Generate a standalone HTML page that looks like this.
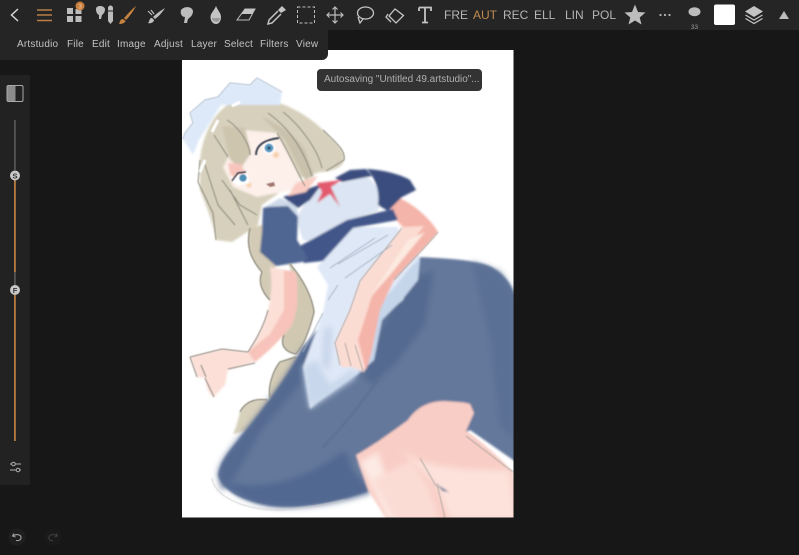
<!DOCTYPE html>
<html><head><meta charset="utf-8">
<style>
html,body{margin:0;padding:0;background:#171717;}
#r{position:relative;width:799px;height:555px;overflow:hidden;background:#171717;font-family:"Liberation Sans",sans-serif;}
#r svg{position:absolute;left:0;top:0;}
.bar{position:absolute;left:0;top:0;width:799px;height:30px;background:#252525;}
.menu{position:absolute;left:0;top:30px;width:328px;height:30px;background:#252525;border-radius:0 0 6px 0;}
.m{position:absolute;top:38px;font-size:10px;line-height:13px;color:#c2c2c2;letter-spacing:.2px;white-space:nowrap;}
.t{position:absolute;top:8px;font-size:12px;line-height:15px;color:#b5b5b5;white-space:nowrap;}
.side{position:absolute;left:0;top:75px;width:30px;height:410px;background:#222;}
.toast{position:absolute;left:317px;top:69px;width:165px;height:22px;background:#333;border-radius:4px;color:#b0b0b0;font-size:10px;line-height:22px;text-indent:7px;letter-spacing:-.03px;white-space:nowrap;overflow:hidden;}
</style></head><body>
<div id="r">
<div class="bar"></div>
<div class="side"></div>

<svg width="799" height="555" viewBox="0 0 799 555">
<defs>
<filter id="b" x="-5%" y="-5%" width="110%" height="110%"><feGaussianBlur stdDeviation="1"/></filter>
<filter id="l" x="-5%" y="-5%" width="110%" height="110%"><feGaussianBlur stdDeviation=".45"/></filter>
<filter id="b2" x="-30%" y="-30%" width="160%" height="160%"><feGaussianBlur stdDeviation="3"/></filter>
<clipPath id="c"><rect x="182" y="50" width="331.500" height="467.500"/></clipPath>
</defs>
<rect x="182" y="50" width="331.500" height="467.500" fill="#fff"/>
<g clip-path="url(#c)">
<g filter="url(#b)">
<!-- braid -->
<path d="M250 228 C246 245 250 258 262 272 C258 282 262 292 270 300 L276 262 L262 225Z" fill="#d3cbb5"/>
<path d="M288 262 C302 276 312 296 314 312 C310 328 304 345 296 354 C285 352 280 345 284 335 L292 318 L296 285Z" fill="#d0c8b1"/>
<path d="M297 356 L280 362 C272 372 268 388 270 400 L282 392 L300 366Z" fill="#d3cbb5"/>
<path d="M268 400 C255 398 245 402 240 412 C238 420 236 428 233 434 C245 432 255 426 262 416Z" fill="#d7d0bb"/>
<!-- skirt -->
<path d="M417 257 C445 258 475 260 490 266 C505 274 513 285 516 300 L516 462 L470 430 L400 470 L372 490 C340 502 300 510 270 506 C245 502 222 492 218 475 C220 460 232 448 240 437 C262 410 285 380 303 347 L340 300 Z" fill="#64789b"/>
<path d="M240 437 C262 410 285 380 303 347 L318 340 L300 385 L262 430 L232 482 L222 490 L218 475 C220 460 232 448 240 437Z" fill="#556b91" filter="url(#b2)"/>
<path d="M406 282 L434 270 L425 325 L395 365 L372 385 L362 375 L380 330Z" fill="#546a90" filter="url(#b2)"/>
<path d="M225 482 C265 492 305 480 345 450 L352 470 L372 492 C340 503 300 510 270 506 C250 502 232 494 225 482Z" fill="#516890" filter="url(#b2)"/>
<path d="M472 262 L500 272 L513 292 L513 440 L500 425 L490 340Z" fill="#5a6f94" filter="url(#b2)"/>
<path d="M378 380 C360 405 340 430 322 448" stroke="#566b90" stroke-width="1.400" fill="none"/>
<!-- legs -->
<path d="M356 455 C372 446 392 432 408 420 C416 408 428 401 445 401 C455 402 465 402 470 404 L474 413 L466 431 C480 440 500 458 513 472 L516 520 L440 520 L436 490 L443 520 L387 520 L368 490Z" fill="#f8cdc5"/>
<path d="M395 445 C420 470 470 470 510 470 L516 520 L450 520 L436 485Z" fill="#fce2db" filter="url(#b2)"/>
<path d="M360 462 L378 452 L400 520 L388 520Z" fill="#fdeae4" filter="url(#b2)"/>
<path d="M372 480 L412 460 L430 490 L440 520 L395 520Z" fill="#fbdcd5" filter="url(#b2)"/>
<path d="M436 484 L449 492 L443 491Z" fill="#4c6490"/>
<!-- left arm -->
<path d="M270 267 L296 272 C298 285 298 300 296 312 L292 325 C282 338 268 352 255 362 L228 370 L225 385 L214 397 C208 394 206 386 205 378 L197 377 L190 357 L222 349 L248 352 C256 340 264 326 268 310 C272 294 272 280 270 267Z" fill="#fce0d8"/>
<path d="M284 270 L296 272 C298 285 298 300 296 312 L292 325 C282 338 268 352 255 362 L248 352 L270 334 L284 310Z" fill="#f7c3ba"/>
<!-- apron -->
<path d="M317 267 L353 227 L397 227 L402 233 L420 257 L403 300 L381 318 L373 358 L355 376 L317 403 L310 409 L303 367 L323 313 L328 285Z" fill="#dfe8f7"/>
<path d="M410 268 L420 258 L418 280 L402 300 L382 320 L374 360 L356 376 L368 340 L380 305Z" fill="#c5d5ea"/>
<path d="M303 367 L316 360 L330 385 L355 368 L355 378 L318 403 L310 409Z" fill="#c8d7eb" filter="url(#b2)"/>
<path d="M324 330 L332 325 L330 370 L322 365Z" fill="#c8d6ea" filter="url(#b2)"/>
<!-- arm right -->
<path d="M390 203 L397 197 C412 203 430 218 438 232 C425 248 410 262 394 280 L378 312 L371 355 L364 372 L352 367 L341 367 L335 343 L350 310 L360 281 L402 228 C396 220 390 212 390 203Z" fill="#fbdcd3"/>
<path d="M390 203 L397 197 C412 203 430 218 438 232 C425 248 410 262 394 280 L380 310 L371 355 L366 370 L358 340 L372 296 L402 255 L424 226 L404 227 C396 220 390 212 390 203Z" fill="#f4b4a9"/>
<path d="M408 240 L425 232 L390 275 L368 300Z" fill="#fce9e0"/>
<!-- torso -->
<path d="M297 222 C298 210 310 195 322 187 L367 177 C376 182 382 195 380 205 L378 211 L347 221 L320 244 L303 240Z" fill="#dbe5f3"/>
<path d="M300 246 L347 220 L393 209 L398 220 L353 228 L323 261 L304 263 L295 250Z" fill="#43578a"/>
<path d="M367 169 C385 170 402 175 410 180 L416 190 L402 197 L388 211 L378 205 C380 190 375 178 367 169Z" fill="#3a4d7e"/>
<path d="M335 178 L350 170 L366 169 L372 176 L342 182Z" fill="#3a4d7e"/>
<path d="M263 208 L288 201 L298 215 L297 240 L308 258 L302 262 L276 266 L260 252 L262 232Z" fill="#4f6592"/>
<path d="M265 207 L280 198 L296 205 L299 218 L288 206Z" fill="#cfdaea"/>
<path d="M283 197 L322 184 L310 200 L298 208Z" fill="#3a4d7e"/>
<!-- ribbon -->
<path d="M317 183 L342 180 L331 187 L340 207 L330 194 L317 203 L322 192Z" fill="#e35a6e"/>
<!-- hair back -->
<path d="M200 160 C203 130 218 102 247 97 C275 97 305 112 323 130 C335 142 346 150 344 160 C343 168 330 172 320 172 L300 178 L262 205 L258 225 L232 242 L216 240 C214 225 206 205 200 190Z" fill="#d7d0bc"/>
<path d="M262 117 C280 125 295 135 305 150 L314 176 L305 180 L285 140Z" fill="#c9c1ab"/>
<!-- headband -->
<path d="M183 139 L193 155 L199 140 L221 105 L280 105 L282 92 L257 78 L250 85 L230 83 L218 97 L205 100 L190 113 L193 123 L185 133Z" fill="#dde9f8"/>
<!-- face -->
<path d="M243 130 L277 133 L305 187 L287 191 L257 197 L233 187 L223 167Z" fill="#fdf0ea"/>
<path d="M222 126 L245 128 L251 153 L241 168 L230 160Z" fill="#cec5af"/>
<path d="M228 163 L241 164 L248 178 L238 180 L230 174Z" fill="#f7c5bb"/>
<path d="M296 183 L312 178 L318 176 L306 192 L288 196Z" fill="#f9cdc3"/>
<circle cx="276" cy="155" r="3" fill="#f7cfa8"/><circle cx="249" cy="185" r="2.500" fill="#f7cfa8"/>
</g>
<g filter="url(#l)">
<!-- lines -->
<path d="M183 139 L185 133 L193 123 L190 113 L205 100 L218 97 L230 83 L250 85 L257 78 L282 92" fill="none" stroke="#b6c2d2" stroke-width="1"/>
<path d="M214 135 L228 157 M205 165 L218 205 L235 225 M227 120 C240 128 250 145 250 155 M268 113 C285 125 302 145 312 176 M283 112 C300 125 318 150 322 168 M323 130 C335 142 346 150 344 160 L326 171 M277 133 C288 150 296 170 305 186 M222 180 L240 205 L257 215 M230 190 L248 225 M200 160 L198 182 L213 213 L216 240" fill="none" stroke="#8f8d80" stroke-width="1"/>
<path d="M250 228 C246 245 250 258 262 272 C258 282 262 292 270 300 M290 264 C302 278 312 296 314 312 C310 328 304 345 296 354 C285 352 280 345 284 335 M296 357 L280 362 C272 372 268 388 270 398 M268 400 C255 398 245 402 240 412" stroke="#8d8a7b" stroke-width="1.300" fill="none"/>
<path d="M248 352 C256 340 264 326 268 310 M190 357 L197 377 M190 357 L222 349 L248 352 M255 363 L228 369 M201 365 L206 377 M205 378 L214 397" stroke="#8f8a83" stroke-width="1" fill="none"/>
<path d="M402 228 L360 281 L350 310 L335 343 L340 365 M345 343 L351 366 M355 345 L363 371 M438 232 C425 248 410 262 394 280 M466 436 L513 472 M420 458 L436 486 M437 484 L445 518" stroke="#a6a19c" stroke-width=".8" fill="none"/>
<path d="M330 268 L375 238 M338 264 L388 235 M345 278 L392 245 M328 300 L338 285 M323 313 L303 352" stroke="#a9b3c2" stroke-width=".9" fill="none"/>
<path d="M212 478 C214 495 240 510 280 510 C310 508 330 503 345 500" fill="none" stroke="#cbcbcb" stroke-width=".9"/>
<path d="M232 106 L240 102 M212 132 L218 120 M200 172 L205 160" stroke="#fff" stroke-width="3" fill="none"/>
<!-- eyes -->
<path d="M256 155 C256 146 263 140 279 138" fill="none" stroke="#3c4452" stroke-width="2"/>
<circle cx="269" cy="148" r="6" fill="#fff"/><circle cx="269" cy="148" r="4.500" fill="#5f9cc4"/><circle cx="269" cy="148" r="1.800" fill="#2c5273"/>
<path d="M232 181 L238 175 L248 173 L249 183 L238 186Z" fill="#fff"/>
<circle cx="243" cy="178" r="3.800" fill="#4f8fb6"/><path d="M232 181 L238 173 L246 172" fill="none" stroke="#3c4452" stroke-width="1.600"/>
<path d="M266 184 L274 182 L275 186 L270 187Z" fill="#a07a72"/>
</g>
</g>

<!-- toolbar icons -->
<path d="M18 9 L11.500 15 L18 21" fill="none" stroke="#d6d6d6" stroke-width="1.500"/>
<path d="M37 10h15M37 15h15M37 20.500h15" stroke="#b97f46" stroke-width="1.600"/>
<g fill="#bdbdbd"><rect x="67" y="8" width="6" height="6"/><rect x="75.500" y="9" width="6" height="5"/><rect x="67" y="16" width="6" height="6"/><rect x="75.500" y="16" width="6" height="6"/></g>
<circle cx="80" cy="6" r="4.500" fill="#c9803e"/><text x="80" y="8.500" font-size="6.500" fill="#efd1b5" text-anchor="middle" font-family="Liberation Sans">3</text>
<path d="M96 9 C96 5 104 5 105 9 C105 13 103 14 102 15 L101 19 L99 19 L99 15 C97 14 96 12 96 9Z" fill="#bdbdbd"/>
<path d="M108 8 a2 2 0 0 1 5 0 V21 L110.500 24 L108 21Z" fill="#bdbdbd"/><path d="M108 11h5" stroke="#252525" stroke-width="1"/>
<path d="M136 6 C131 10 127 15 124 18 L126 20 C129 17 133 12 136 6Z M123 19 C120 19 120 22 119 24 C122 24 125 23 125.500 21Z" fill="#c58240"/>
<path d="M165 8 C160 11 156 14 153 17 L155 19 C158 17 162 13 165 8Z M152 18 C149 18 150 21 148 23 C151 24 154 22 154 20Z" fill="#bdbdbd"/><path d="M148 11 l4 4 M151 10 l3 4" stroke="#bdbdbd" stroke-width="1.200"/>
<path d="M181 10 C184 6 192 6 193 11 C193 16 189 18 188 19 L187 23 L184 23 L185 17 C182 17 180 14 181 10Z" fill="#bdbdbd"/>
<path d="M216 6 C218 11 221 13 221 17 C221 21 219 24 216 24 C213 24 210.500 21 210.500 17 C210.500 13 214 11 216 6Z" fill="#c4c4c4"/><path d="M212 18 C212 21 215 22 217 22 C219 22 220 19 220 18Z" fill="#9a9a9a"/>
<path d="M245 9 L255 9 L249 20 L237 20Z" fill="none" stroke="#bdbdbd" stroke-width="1"/><path d="M245 9 L255 9 L252 14 L241 14Z" fill="#c4c4c4"/>
<path d="M282 6 L286 10 L281 13 L278 10Z" fill="#c4c4c4"/><path d="M278 11 L269 20 L268 24 L272 23 L281 14" fill="none" stroke="#c4c4c4" stroke-width="1.500"/>
<rect x="297.500" y="7" width="17" height="16" fill="none" stroke="#bdbdbd" stroke-width="1" stroke-dasharray="3 2"/>
<path d="M335 7V23M327 15H343M332.500 9.500 335 7l2.500 2.500M332.500 20.500 335 23l2.500-2.500M329.500 12.500 327 15l2.500 2.500M340.500 12.500 343 15l-2.500 2.500" fill="none" stroke="#bdbdbd" stroke-width="1.200"/>
<ellipse cx="365.500" cy="13" rx="8" ry="6" fill="none" stroke="#c4c4c4" stroke-width="1.300"/><path d="M358 17 L360 23 L363 19" fill="none" stroke="#c4c4c4" stroke-width="1.300"/>
<path d="M395 9 L403.500 15.500 L396 23 L389 16Z" fill="none" stroke="#c4c4c4" stroke-width="1.300"/><path d="M388 14 L386 17 L391 22" fill="none" stroke="#c4c4c4" stroke-width="1.300"/>
<path d="M419 7.500H431V11M419 11V7.500M425 7.500V22M422 22.500H428" fill="none" stroke="#c4c4c4" stroke-width="1.800"/>
<path d="M635 4.500 L638 12 L645.500 12.500 L639.700 17.500 L641.500 24.500 L635 20.500 L628.500 24.500 L630.300 17.500 L624.500 12.500 L632 12Z" fill="#bdbdbd"/>
<g fill="#b5b5b5"><circle cx="660.500" cy="15" r="1.100"/><circle cx="665" cy="15" r="1.100"/><circle cx="669.500" cy="15" r="1.100"/></g>
<ellipse cx="694.500" cy="11.700" rx="6" ry="4.500" fill="#bdbdbd"/>
<text x="694.500" y="29" font-size="6.500" fill="#9a9a9a" text-anchor="middle" font-family="Liberation Sans">33</text>
<rect x="714" y="4.500" width="21" height="20.500" rx="2" fill="#fff"/>
<path d="M754 6 L763 11.500 L754 17 L745 11.500Z" fill="#c4c4c4"/>
<path d="M745.500 15 L754 20 L762.500 15M745.500 18.500 L754 23.500 L762.500 18.500" fill="none" stroke="#c4c4c4" stroke-width="1.200"/>
<path d="M784 11 L789 19 L779 19Z" fill="#bdbdbd"/>

<!-- side panel -->
<rect x="7" y="85.500" width="16" height="16" rx="1.500" fill="#222" stroke="#aaa" stroke-width="1"/>
<rect x="7.500" y="86" width="8" height="15" fill="#8c8c8c"/>
<rect x="14" y="120" width="1.800" height="50" fill="#555"/>
<rect x="14" y="180" width="1.800" height="92" fill="#b57c42"/>
<rect x="14" y="272" width="1.800" height="13" fill="#555"/>
<rect x="14" y="295" width="1.800" height="146" fill="#b57c42"/>
<circle cx="15" cy="175.500" r="5" fill="#c8c8c8"/>
<text x="15" y="178.300" font-size="7.500" font-weight="bold" fill="#333" text-anchor="middle" font-family="Liberation Sans">S</text>
<circle cx="15" cy="290" r="5" fill="#c8c8c8"/>
<text x="15" y="292.800" font-size="7.500" font-weight="bold" fill="#333" text-anchor="middle" font-family="Liberation Sans">F</text>
<path d="M10 464H21M10 470H21" stroke="#b0b0b0" stroke-width="1"/>
<circle cx="13.500" cy="464" r="1.800" fill="#222" stroke="#b0b0b0"/><circle cx="18" cy="470" r="1.800" fill="#222" stroke="#b0b0b0"/>

<!-- undo / redo -->
<circle cx="17" cy="537" r="8.500" fill="#1f1f1f"/>
<path d="M14 533.500 L12.500 536 L15.500 537 M13 536 C16 533.500 21 534.500 21 537.500 C21 540 18.500 541 16 540.500" fill="none" stroke="#a0a0a0" stroke-width="1.100"/>
<circle cx="53" cy="537" r="8.500" fill="#1a1a1a"/>
<path d="M56 533.500 L57.500 536 L54.500 537 M57 536 C54 533.500 49 534.500 49 537.500 C49 540 51 541 53 540.500" fill="none" stroke="#3d3d3d" stroke-width="1.100"/>
</svg>

<div class="t" style="left:444px">FRE</div>
<div class="t" style="left:473px;color:#c08a50">AUT</div>
<div class="t" style="left:503px">REC</div>
<div class="t" style="left:534px">ELL</div>
<div class="t" style="left:565px">LIN</div>
<div class="t" style="left:592px">POL</div>

<div class="menu"></div>
<div class="m" style="left:17px">Artstudio</div>
<div class="m" style="left:67px">File</div>
<div class="m" style="left:92px">Edit</div>
<div class="m" style="left:117px">Image</div>
<div class="m" style="left:154px">Adjust</div>
<div class="m" style="left:191px">Layer</div>
<div class="m" style="left:224px">Select</div>
<div class="m" style="left:260px">Filters</div>
<div class="m" style="left:296px">View</div>

<div class="toast">Autosaving "Untitled 49.artstudio"...</div>
</div>
</body></html>
